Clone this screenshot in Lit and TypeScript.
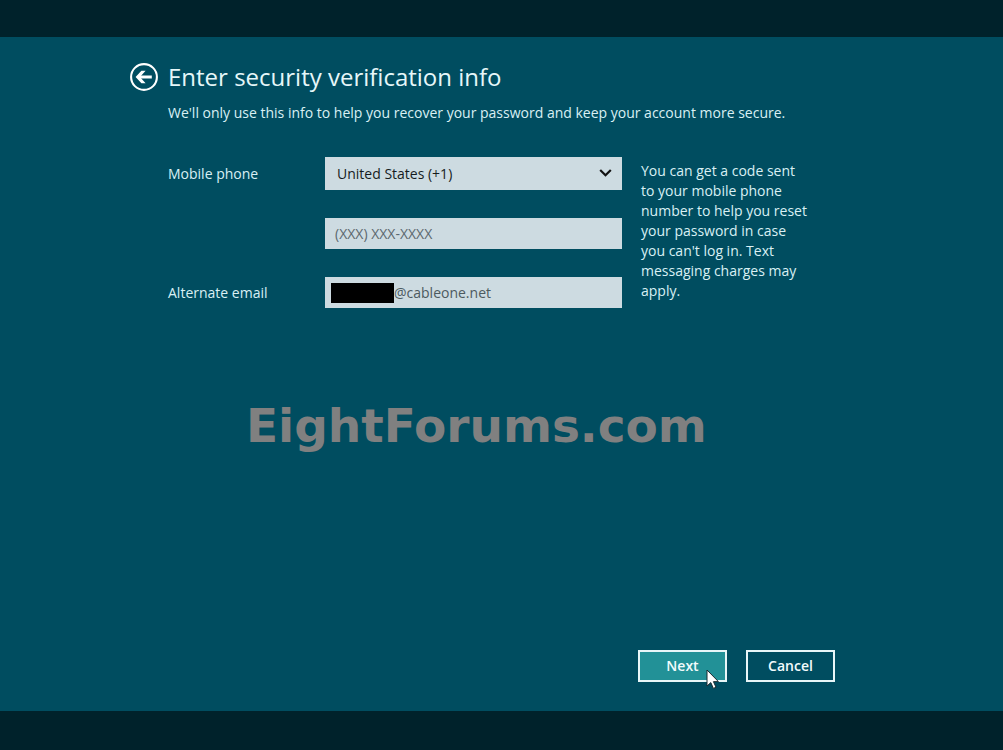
import { LitElement, html, css } from "lit";
import { customElement, state } from "lit/decorators.js";

@customElement("app-root")
export class AppRoot extends LitElement {
  static styles = css`
    :host {
      display: block;
      font-family: "Open Sans", "Noto Sans", sans-serif;
      font-size: 14px;
      line-height: 20px;
      color: #d9f0f4;
    }
    * { box-sizing: border-box; }
    .screen {
      min-height: 100vh;
      display: flex;
      flex-direction: column;
      background: #004d60;
      border-top: 37px solid #00222b;
      border-bottom: 39px solid #00222b;
    }
    .panel {
      flex: 1;
      display: flex;
      flex-direction: column;
      width: 100%;
      max-width: 835px;
      padding: 23px 0 29px 129px;
    }
    .header {
      display: grid;
      grid-template-columns: 29px 1fr;
      column-gap: 10px;
      align-items: center;
    }
    .back {
      width: 30px;
      height: 30px;
      padding: 0;
      border: 0;
      background: none;
      color: #fff;
      cursor: pointer;
    }
    .back svg { display: block; }
    h1 {
      margin: 0;
      font-size: 24px;
      line-height: 34px;
      font-weight: 400;
      color: #e6f7f9;
    }
    .intro { grid-column: 2; margin: 9px 0 0; }
    .form {
      display: grid;
      grid-template-columns: 157px minmax(0, 297px) 168px;
      padding-left: 39px;
      margin-top: 34px;
    }
    .fields {
      grid-column: 1 / 3;
      display: grid;
      grid-template-columns: 157px minmax(0, 1fr);
      row-gap: 28px;
      align-content: start;
      align-items: center;
    }
    .control { grid-column: 2; position: relative; }
    select, input {
      display: block;
      width: 100%;
      height: 31px;
      margin: 0;
      border: 0;
      border-radius: 0;
      background: #cddbe1;
      font: inherit;
      color: #4c5a60;
      padding: 0 10px;
    }
    select {
      height: 33px;
      padding: 0 12px;
      appearance: none;
      color: #151b1e;
    }
    input::placeholder { color: #5b686e; opacity: 1; }
    .chevron {
      position: absolute;
      right: 10px;
      top: 11px;
      pointer-events: none;
    }
    .email { padding-left: 69px; }
    .redaction {
      position: absolute;
      left: 6px;
      top: 6px;
      width: 63px;
      height: 20px;
      background: #000;
    }
    .help { margin: 4px 0 0; padding-left: 19px; width: 190px; }
    .watermark {
      margin: 90px 0 0 117px;
      font: 700 47px/56px "DejaVu Sans", Verdana, sans-serif;
      color: #808080;
    }
    .actions {
      margin-top: auto;
      display: flex;
      justify-content: flex-end;
      gap: 19px;
    }
    .action { position: relative; }
    .action button {
      display: block;
      width: 89px;
      height: 32px;
      padding: 0;
      border: 2px solid #e8f6f8;
      background: transparent;
      font: inherit;
      font-weight: 600;
      color: #f2fbfc;
      cursor: pointer;
    }
    .action .primary { background: #229197; }
    .pointer {
      position: absolute;
      left: 67px;
      top: 18px;
      pointer-events: none;
    }
  `;

  @state() private phone = "";
  @state() private email = "@cableone.net";

  render() {
    return html`
      <main class="screen">
        <div class="panel">
          <header class="header">
            <button class="back" aria-label="Back">
              <svg width="30" height="30" viewBox="0 0 30 30" fill="none" stroke="currentColor">
                <circle cx="15" cy="15" r="12.9" stroke-width="2.1" />
                <path d="M9.5 15H22.8" stroke-width="3" />
                <path d="M16.6 8.8H12.4L6.6 15L12.4 21.2H16.6L11 15Z" fill="currentColor" stroke="none" />
              </svg>
            </button>
            <h1>Enter security verification info</h1>
            <p class="intro">
              We'll only use this info to help you recover your password and keep your account more secure.
            </p>
          </header>
          <form class="form">
            <div class="fields">
              <label for="country">Mobile phone</label>
              <div class="control">
                <select id="country">
                  <option>United States (+1)</option>
                </select>
                <svg class="chevron" width="13" height="10" viewBox="0 0 13 10" fill="none" stroke="#111" stroke-width="2.2">
                  <path d="M1.2 2L6.5 7.2L11.8 2" />
                </svg>
              </div>
              <div class="control">
                <input
                  type="tel"
                  aria-label="Phone number"
                  placeholder="(XXX) XXX-XXXX"
                  .value=${this.phone}
                  @input=${(e: Event) => (this.phone = (e.target as HTMLInputElement).value)}
                />
              </div>
              <label for="email">Alternate email</label>
              <div class="control">
                <input
                  id="email"
                  class="email"
                  type="text"
                  .value=${this.email}
                  @input=${(e: Event) => (this.email = (e.target as HTMLInputElement).value)}
                />
                <span class="redaction"></span>
              </div>
            </div>
            <p class="help">
              You can get a code sent to your mobile phone number to help you reset your password in
              case you can't log in. Text messaging charges may apply.
            </p>
          </form>
          <div class="watermark">EightForums.com</div>
          <div class="actions">
            <div class="action">
              <button class="primary" type="button">Next</button>
              <svg class="pointer" width="16" height="24" viewBox="0 0 16 24">
                <path d="M2 2V18L5.8 14.6L8.4 20.4L11 19.2L8.4 13.6H13.4Z" fill="#fff" stroke="#1b2a30" stroke-width="1" />
              </svg>
            </div>
            <div class="action"><button type="button">Cancel</button></div>
          </div>
        </div>
      </main>
    `;
  }
}
